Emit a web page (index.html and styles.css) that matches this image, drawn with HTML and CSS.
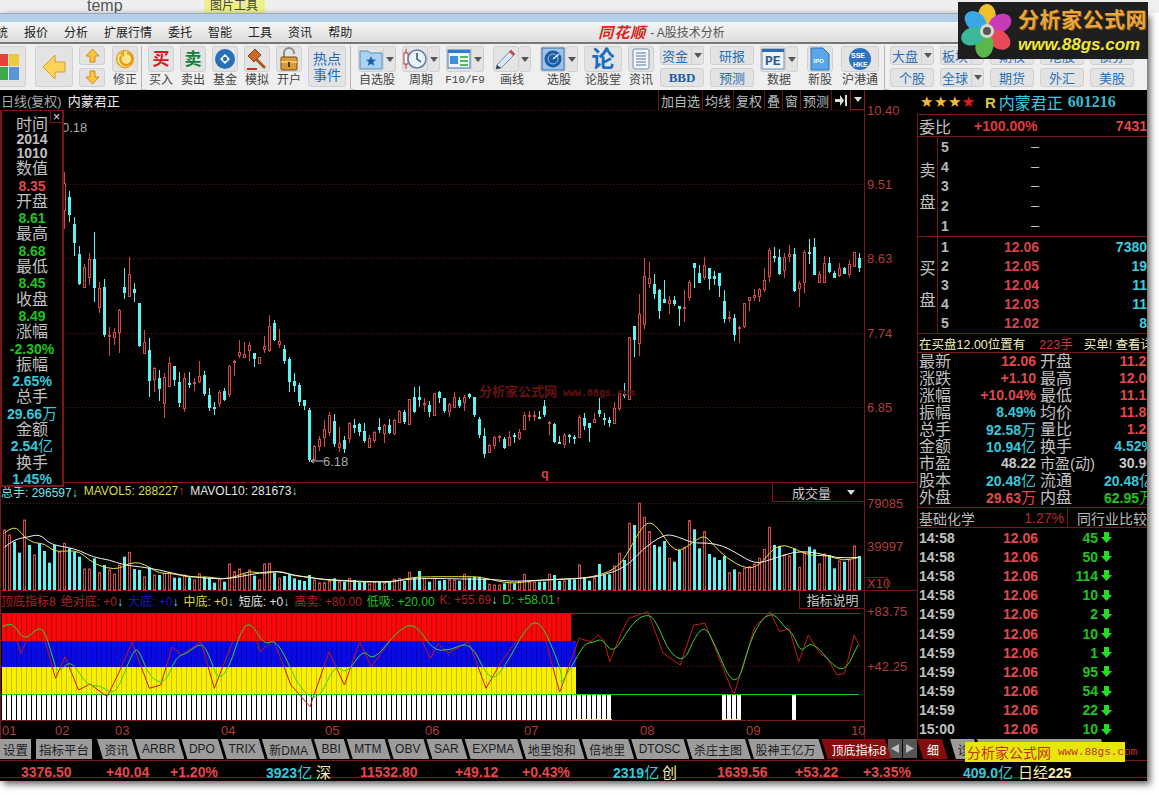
FILE: index.html
```html
<!DOCTYPE html>
<html lang="en">
<head>
    <meta charset="UTF-8">
    <title>同花顺 - A股技术分析</title>
    <link rel="stylesheet" href="styles.css">
</head>
<body>
    <svg class="defs" width="0" height="0">
        <symbol id="down" viewBox="0 0 11 11"><path d="M3 0h5v5h3L5.500 11 0 5h3z" fill="#22dd22"/></symbol>
        <symbol id="caret" viewBox="0 0 8 5"><path d="M0 0h8L4 5z" fill="#555"/></symbol>
    </svg>

    <div class="strip">
        <span class="strip-name">temp</span>
        <span class="strip-tab">图片工具</span>
    </div>

    <div class="window">
        <div class="blueband"></div>
        <div class="menubar">
            <span class="menu-cut">统</span>
            <span>报价</span><span>分析</span><span>扩展行情</span><span>委托</span>
            <span>智能</span><span>工具</span><span>资讯</span><span>帮助</span>
            <b class="brand">同花顺</b>
            <span class="brand-sub">- A股技术分析</span>
        </div>

        <!-- Toolbar -->
        <div class="toolbar">
            <div class="btn big colors">
                <svg width="20" height="26" viewBox="0 0 20 26"><rect y="0" width="9" height="12" fill="#e8423c"/><rect x="10" width="10" height="12" fill="#ecc93c"/><rect y="13" width="9" height="13" fill="#3fa84a"/><rect x="10" y="13" width="10" height="13" fill="#5a93d6"/></svg>
            </div>
            <div class="btn big back">
                <svg width="24" height="26" viewBox="0 0 24 26"><path d="M1 13 13 1v7h10v10H13v7z" fill="#fbd45c" stroke="#d89a2a"/></svg>
            </div>
            <div class="stack narrow">
                <div class="btn"><svg width="15" height="15" viewBox="0 0 15 15"><path d="M7.500 1 14 8h-4v6H5V8H1z" fill="#fbc63c" stroke="#cf8a1c"/></svg></div>
                <div class="btn"><svg width="15" height="15" viewBox="0 0 15 15"><path d="M7.500 14 14 7h-4V1H5v6H1z" fill="#fbc63c" stroke="#cf8a1c"/></svg></div>
            </div>
            <div class="tool">
                <div class="btn icon"><svg width="20" height="20" viewBox="0 0 20 20"><circle cx="10" cy="10" r="8.500" fill="#fde68c" stroke="#e0a62c" stroke-width="1.500"/><path d="M12 4a6 6 0 1 1-6 3" fill="none" stroke="#e39a1c" stroke-width="2.200"/><path d="M9 2v6L5 5z" fill="#e39a1c"/></svg></div>
                <span class="tool-label">修正</span>
            </div>
            <div class="sep"></div>
            <div class="tool">
                <div class="btn icon"><b class="glyph buy">买</b></div>
                <span class="tool-label">买入</span>
            </div>
            <div class="tool">
                <div class="btn icon"><b class="glyph sell">卖</b></div>
                <span class="tool-label">卖出</span>
            </div>
            <div class="tool">
                <div class="btn icon"><svg width="22" height="22" viewBox="0 0 22 22"><circle cx="11" cy="11" r="10" fill="#2670b8"/><path d="M18 1l3 3-2 1zM11 6l5 5-5 5-5-5z" fill="#fff"/><circle cx="11" cy="11" r="2.200" fill="#2670b8"/></svg></div>
                <span class="tool-label">基金</span>
            </div>
            <div class="tool">
                <div class="btn icon"><svg width="22" height="22" viewBox="0 0 22 22"><path d="M2 8 9 1l6 6-7 7z" fill="#c86a2c" stroke="#8a3f14"/><path d="m11 10 9 9-2 2-9-9z" fill="#a9551f"/><path d="M1 20h10v2H1z" fill="#c83020"/></svg></div>
                <span class="tool-label">模拟</span>
            </div>
            <div class="tool">
                <div class="btn icon"><svg width="20" height="24" viewBox="0 0 20 24"><path d="M5 11V6a5 5 0 0 1 10 0v1" fill="none" stroke="#8d8d8d" stroke-width="2"/><rect x="2" y="10" width="16" height="13" rx="1" fill="#d99a3c" stroke="#7a4a14"/><path d="M2 14h16v2H2z" fill="#f3c66c"/><rect x="9" y="15" width="2" height="5" fill="#5a3208"/></svg></div>
                <span class="tool-label">开户</span>
            </div>
            <div class="btn hot">热点<br>事件</div>
            <div class="sep second"></div>
            <div class="tool wide">
                <div class="split">
                    <div class="btn icon"><svg width="24" height="22" viewBox="0 0 24 22"><path d="M1 3h8l2 2h12v16H1z" fill="#a9d3f2" stroke="#5a8fbc"/><path d="m12 8 1.500 3.500 3.500.3-2.700 2.300.9 3.600-3.200-2-3.200 2 .9-3.600L7 11.800l3.500-.3z" fill="#1c5ea8"/></svg></div>
                    <div class="btn drop"><svg width="8" height="5"><use href="#caret"/></svg></div>
                </div>
                <span class="tool-label">自选股</span>
            </div>
            <div class="tool wide">
                <div class="split">
                    <div class="btn icon"><svg width="24" height="24" viewBox="0 0 24 24"><path d="M3 2v20" stroke="#c03030"/><rect x="1" y="6" width="4" height="11" fill="#fff" stroke="#c03030"/><circle cx="14" cy="12" r="9" fill="#eaf2fa" stroke="#5a7fa6" stroke-width="1.500"/><path d="M14 6v6l4 3" fill="none" stroke="#2c5a88" stroke-width="1.500"/></svg></div>
                    <div class="btn drop"><svg width="8" height="5"><use href="#caret"/></svg></div>
                </div>
                <span class="tool-label">周期</span>
            </div>
            <div class="tool wide">
                <div class="split">
                    <div class="btn icon"><svg width="24" height="20" viewBox="0 0 24 20"><rect x="1" y="1" width="22" height="18" fill="#eef4fb" stroke="#3a78b8"/><path d="M1 1h22v3H1z" fill="#2e7ad0"/><path d="M3 7h8v8H3z" fill="#3f8ee0"/><path d="M13 7h8v2h-8zM13 11h8v2h-8zM13 15h8v2h-8z" fill="#58b860"/></svg></div>
                    <div class="btn drop"><svg width="8" height="5"><use href="#caret"/></svg></div>
                </div>
                <span class="tool-label mono">F10/F9</span>
            </div>
            <div class="tool wide far">
                <div class="split">
                    <div class="btn icon"><svg width="24" height="24" viewBox="0 0 24 24"><path d="M3 18 17 3l4 4L7 21l-5 1z" fill="#dbe7f3" stroke="#6d8cb0"/><path d="m15 5 4 4 2-2-4-4z" fill="#d84a4a"/><path d="M3 18l4 3-5 1z" fill="#3a3a3a"/></svg></div>
                    <div class="btn drop"><svg width="8" height="5"><use href="#caret"/></svg></div>
                </div>
                <span class="tool-label">画线</span>
            </div>
            <div class="tool wide far">
                <div class="split">
                    <div class="btn icon"><svg width="24" height="24" viewBox="0 0 24 24"><rect x="1" y="1" width="22" height="22" fill="#9cc3e8" stroke="#3a6ea8"/><circle cx="12" cy="12" r="8.500" fill="#1d5aa0"/><circle cx="12" cy="12" r="5" fill="none" stroke="#8cc8f0"/><path d="M12 12l6-5" stroke="#e8f4ff" stroke-width="1.500"/></svg></div>
                    <div class="btn drop"><svg width="8" height="5"><use href="#caret"/></svg></div>
                </div>
                <span class="tool-label">选股</span>
            </div>
            <div class="tool wide">
                <div class="btn icon full"><b class="glyph lun">论</b></div>
                <span class="tool-label">论股堂</span>
            </div>
            <div class="tool">
                <div class="btn icon"><svg width="18" height="22" viewBox="0 0 18 22"><rect x="1" y="1" width="16" height="20" rx="2" fill="#f2f6fb" stroke="#6f8fb0"/><path d="M4 5h10M4 8h10M4 11h10M4 14h10M4 17h10" stroke="#5a7696"/></svg></div>
                <span class="tool-label">资讯</span>
            </div>
            <div class="stack">
                <div class="btn pair">资金<i class="cut"><svg width="8" height="5"><use href="#caret"/></svg></i></div>
                <div class="btn pair bbd">BBD</div>
            </div>
            <div class="stack">
                <div class="btn pair">研报</div>
                <div class="btn pair">预测</div>
            </div>
            <div class="tool wide">
                <div class="split">
                    <div class="btn icon"><svg width="24" height="24" viewBox="0 0 24 24"><rect x="1" y="2" width="22" height="20" fill="#eef3f9" stroke="#6d8cb0"/><path d="M1 2h22v3H1z" fill="#2c6cb0"/><text x="4" y="18" class="pe">PE</text></svg></div>
                    <div class="btn drop"><svg width="8" height="5"><use href="#caret"/></svg></div>
                </div>
                <span class="tool-label">数据</span>
            </div>
            <div class="tool ipo-tool">
                <div class="btn icon"><svg width="20" height="24" viewBox="0 0 20 24"><path d="M1 1h12l6 6v16H1z" fill="#5aa6e8" stroke="#2c72b8"/><text x="3.500" y="16" class="ipo">IPO</text></svg></div>
                <span class="tool-label">新股</span>
            </div>
            <div class="tool wide ssh">
                <div class="btn icon full"><svg width="26" height="24" viewBox="0 0 26 24"><circle cx="13" cy="12" r="11" fill="#2c72c0"/><text x="4" y="11" class="sse">SSE</text><text x="6" y="20" class="sse">HKE</text></svg></div>
                <span class="tool-label">沪港通</span>
            </div>
            <div class="sep thin"></div>
            <div class="stack">
                <div class="btn pair">大盘<i class="cut"><svg width="8" height="5"><use href="#caret"/></svg></i></div>
                <div class="btn pair">个股</div>
            </div>
            <div class="stack">
                <div class="btn pair">板块<i class="cut"><svg width="8" height="5"><use href="#caret"/></svg></i></div>
                <div class="btn pair">全球<i class="cut"><svg width="8" height="5"><use href="#caret"/></svg></i></div>
            </div>
            <div class="stack"><div class="btn pair">期权</div><div class="btn pair">期货</div></div>
            <div class="stack"><div class="btn pair">港股</div><div class="btn pair">外汇</div></div>
            <div class="stack"><div class="btn pair">债券</div><div class="btn pair">美股</div></div>
        </div>

        <!-- Logo stamped over the window -->
        <div class="logo">
            <svg width="58" height="54" viewBox="-29 -27 58 54">
                <ellipse cx="0" cy="-15" rx="9" ry="12" fill="#f0c02c"/>
                <ellipse cx="0" cy="-15" rx="9" ry="12" fill="#3aa8e8" transform="rotate(-50)"/>
                <ellipse cx="0" cy="-15" rx="9" ry="12" fill="#c83ab8" transform="rotate(60)"/>
                <ellipse cx="0" cy="-15" rx="9" ry="12" fill="#e84a5a" transform="rotate(125)"/>
                <ellipse cx="0" cy="-15" rx="9" ry="12" fill="#5ab84a" transform="rotate(190)"/>
                <ellipse cx="0" cy="-15" rx="9" ry="12" fill="#3ab89a" transform="rotate(250)"/>
                <circle r="7" fill="#d8d8c8"/>
                <circle r="4" fill="#555"/>
            </svg>
            <div class="logo-text">
                <b class="logo-name">分析家公式网</b>
                <b class="logo-url">www.88gs.com</b>
            </div>
        </div>

        <!-- Main black area -->
        <div class="main">
            <div class="upper">
                <div class="chart">
                    <div class="chart-head">
                        <span class="chart-title">日线(复权)</span>
                        <span class="chart-name">内蒙君正</span>
                        <div class="chart-btns">
                            <span>加自选</span><span>均线</span><span>复权</span><span>叠</span><span>窗</span><span>预测</span>
                            <span class="arrow-btn"><svg width="12" height="11" viewBox="0 0 12 11"><path d="M0 4h5V0l4 5.500L5 11V7H0zM10 0h2v11h-2z" fill="#ddd"/></svg></span>
                            <span class="arrow-btn"><svg width="8" height="5" viewBox="0 0 8 5"><path d="M0 0h8L4 5z" fill="#ddd"/></svg></span>
                        </div>
                    </div>

                    <div class="panel kline">
                        <svg class="plot" id="kline" viewBox="0 110 917 372">
                            <text x="867" y="115" class="axis">10.40</text>
                            <text x="867" y="189" class="axis">9.51</text>
                            <text x="867" y="263" class="axis">8.63</text>
                            <text x="867" y="338" class="axis">7.74</text>
                            <text x="867" y="412" class="axis">6.85</text>
                            <text x="62" y="132" class="note">0.18</text>
                            <path d="M311 461h12M311 461l3-2M311 461l3 2" stroke="#ccc" fill="none"/>
                            <text x="323" y="466" class="note">6.18</text>
                            <text x="479" y="396" class="mark">分析家公式网</text>
                            <text x="563" y="396" class="mark-url">www.88gs.com</text>
                            <text x="541" y="478" class="q">q</text>
                        </svg>
                        <div class="info">
                            <span class="info-x">×</span>
                            <span class="lbl">时间</span>
                            <span class="date">2014</span>
                            <span class="date">1010</span>
                            <span class="lbl">数值</span><span class="num up">8.35</span>
                            <span class="lbl">开盘</span><span class="num dn">8.61</span>
                            <span class="lbl">最高</span><span class="num dn">8.68</span>
                            <span class="lbl">最低</span><span class="num dn">8.45</span>
                            <span class="lbl">收盘</span><span class="num dn">8.49</span>
                            <span class="lbl">涨幅</span><span class="num dn">-2.30%</span>
                            <span class="lbl">振幅</span><span class="num cy">2.65%</span>
                            <span class="lbl">总手</span><span class="num cy">29.66<em>万</em></span>
                            <span class="lbl">金额</span><span class="num cy">2.54<em>亿</em></span>
                            <span class="lbl">换手</span><span class="num cy">1.45%</span>
                        </div>
                    </div>

                    <div class="panel volume">
                        <svg class="plot" id="volume" viewBox="0 482 917 109">
                            <text x="867" y="508" class="axis">79085</text>
                            <text x="867" y="551" class="axis">39997</text>
                            <text x="867" y="588" class="axis">X10</text>
                            <path d="M865.500 577.500h22v13" fill="none" stroke="#7a1616"/>
                        </svg>
                        <div class="legend">
                            <span class="c-cy">总手: 296597<i>↓</i></span>
                            <span class="c-ye">MAVOL5: 288227<i class="c-re">↑</i></span>
                            <span class="c-wh">MAVOL10: 281673<i class="c-cy">↓</i></span>
                        </div>
                        <div class="panel-tag vol-tag">成交量<svg width="8" height="5" viewBox="0 0 8 5"><path d="M0 0h8L4 5z" fill="#ddd"/></svg></div>
                    </div>

                    <div class="panel indicator">
                        <svg class="plot" id="kdj" viewBox="0 591 917 130">
                            <text x="867" y="616" class="axis">+83.75</text>
                            <text x="867" y="671" class="axis">+42.25</text>
                        </svg>
                        <div class="legend">
                            <span class="c-dr">顶底指标8</span>
                            <span class="c-dr">绝对底: +0<i class="c-cy">↓</i></span>
                            <span class="c-bl">大底: +0<i class="c-cy">↓</i></span>
                            <span class="c-ye">中底: +0<i class="c-cy">↓</i></span>
                            <span class="c-wh">短底: +0<i class="c-cy">↓</i></span>
                            <span class="c-dr">高卖: +80.00</span>
                            <span class="c-gr">低吸: +20.00</span>
                            <span class="c-dr">K: +55.69<i class="c-cy">↓</i></span>
                            <span class="c-gr">D: +58.01<i class="c-re">↑</i></span>
                        </div>
                        <div class="panel-tag ind-tag">指标说明</div>
                    </div>

                    <div class="panel dates">
                        <svg class="plot" viewBox="0 721 917 18">
                            <path d="M.500 721v18M864.500 721v18" stroke="#7a1616"/>
                            <text x="2" y="735" class="axis">01</text>
                            <text x="55" y="735" class="axis">02</text>
                            <text x="115" y="735" class="axis">03</text>
                            <text x="221" y="735" class="axis">04</text>
                            <text x="325" y="735" class="axis">05</text>
                            <text x="425" y="735" class="axis">06</text>
                            <text x="524" y="735" class="axis">07</text>
                            <text x="640" y="735" class="axis">08</text>
                            <text x="746" y="735" class="axis">09</text>
                            <text x="851" y="735" class="axis">10</text>
                        </svg>
                    </div>
                </div>

                <!-- Quote panel -->
                <div class="side">
                    <div class="side-title">
                        <span class="stars">★★★<i>★</i></span>
                        <span class="side-r">R</span>
                        <span class="side-name">内蒙君正</span>
                        <b class="side-code">601216</b>
                    </div>
                    <div class="side-body">
                        <div class="wb">
                            <span class="cjk16">委比</span>
                            <b class="wb-pct">+100.00%</b>
                            <b class="wb-vol">7431</b>
                        </div>
                        <div class="book book-sell">
                            <div class="book-tag"><span>卖</span><span>盘</span></div>
                            <div class="book-rows">
                                <div class="book-row"><b>5</b><b class="px wh">—</b><b class="qty"></b></div>
                                <div class="book-row"><b>4</b><b class="px wh">—</b><b class="qty"></b></div>
                                <div class="book-row"><b>3</b><b class="px wh">—</b><b class="qty"></b></div>
                                <div class="book-row"><b>2</b><b class="px wh">—</b><b class="qty"></b></div>
                                <div class="book-row"><b>1</b><b class="px wh">—</b><b class="qty"></b></div>
                            </div>
                        </div>
                        <div class="book book-buy">
                            <div class="book-tag"><span>买</span><span>盘</span></div>
                            <div class="book-rows">
                                <div class="book-row"><b>1</b><b class="px">12.06</b><b class="qty">7380</b></div>
                                <div class="book-row"><b>2</b><b class="px">12.05</b><b class="qty">19</b></div>
                                <div class="book-row"><b>3</b><b class="px">12.04</b><b class="qty">11</b></div>
                                <div class="book-row"><b>4</b><b class="px">12.03</b><b class="qty">11</b></div>
                                <div class="book-row"><b>5</b><b class="px">12.02</b><b class="qty">8</b></div>
                            </div>
                        </div>
                        <div class="notice">在买盘12.00位置有<em>223手</em><span>买单! 查看详细</span></div>
                        <div class="stats">
                            <span>最新</span><b class="up">12.06</b><span>开盘</span><b class="up">11.20</b>
                            <span>涨跌</span><b class="up">+1.10</b><span>最高</span><b class="up">12.06</b>
                            <span>涨幅</span><b class="up">+10.04%</b><span>最低</span><b class="up">11.12</b>
                            <span>振幅</span><b class="cy">8.49%</b><span>均价</span><b class="up">11.85</b>
                            <span>总手</span><b class="cy">92.58<em>万</em></b><span>量比</span><b class="up">1.25</b>
                            <span>金额</span><b class="cy">10.94<em>亿</em></b><span>换手</span><b class="cy">4.52%</b>
                            <span>市盈</span><b class="wh">48.22</b><span class="nowrap">市盈(动)</span><b class="wh">30.90</b>
                            <span>股本</span><b class="cy">20.48<em>亿</em></b><span>流通</span><b class="cy">20.48<em>亿</em></b>
                            <span>外盘</span><b class="up">29.63<em>万</em></b><span>内盘</span><b class="dn">62.95<em>万</em></b>
                        </div>
                        <div class="sector">
                            <span class="sector-name">基础化学</span>
                            <span class="sector-pct">1.27%</span>
                            <span class="sector-link">同行业比较</span>
                        </div>
                        <div class="ticks" id="ticks"></div>
                    </div>
                </div>
            </div>

            <div class="tabs">
                <div class="tabs-left">
                    <span class="tab flat">设置</span>
                    <span class="tab flat">指标平台</span>
                    <span class="tab">资讯</span><span class="tab">ARBR</span><span class="tab">DPO</span>
                    <span class="tab">TRIX</span><span class="tab">新DMA</span><span class="tab">BBI</span>
                    <span class="tab">MTM</span><span class="tab">OBV</span><span class="tab">SAR</span>
                    <span class="tab">EXPMA</span><span class="tab">地里饱和</span><span class="tab">倍地里</span>
                    <span class="tab">DTOSC</span><span class="tab">杀庄主图</span><span class="tab">股神王亿万</span>
                    <span class="tab active">顶底指标8</span>
                    <span class="tab-arrow"><svg width="8" height="9" viewBox="0 0 8 9"><path d="M8 0v9L0 4.500z" fill="#bbb"/></svg></span>
                    <span class="tab-arrow"><svg width="8" height="9" viewBox="0 0 8 9"><path d="M0 0v9l8-4.500z" fill="#bbb"/></svg></span>
                </div>
                <span class="tab active fine">细</span>
                <span class="tab zhen">诊</span>
                <span class="tab blank"></span>
                <div class="banner">分析家公式网<span>www.88gs.com</span></div>
            </div>

            <div class="status">
                <b class="up">3376.50</b><b class="up">+40.04</b><b class="up">+1.20%</b>
                <b class="cy">3923<em>亿</em></b><span class="st-name">深</span>
                <b class="up">11532.80</b><b class="up">+49.12</b><b class="up">+0.43%</b>
                <b class="cy">2319<em>亿</em></b><span class="st-name">创</span>
                <b class="up">1639.56</b><b class="up">+53.22</b><b class="up">+3.35%</b>
                <b class="cy">409.0<em>亿</em></b><span class="st-name pale">日经<b>225</b></span>
            </div>
            <div class="cutrow"></div>
        </div>
    </div>

    <script src="chart.js"></script>
</body>
</html>
```

FILE: styles.css
```css
* {
    box-sizing: border-box;
}
html, body {
    margin: 0;
    padding: 0;
    background-color: #fff;
}
body {
    width: 1159px;
    height: 795px;
    overflow: hidden;
    font-family: "Liberation Sans", "Noto Sans CJK SC", sans-serif;
    font-size: 12px;
}
em, i {
    font-style: normal;
}
.defs {
    position: absolute;
}

/* Top of the desktop */
.strip {
    height: 13px;
    display: flex;
    background-color: #efefef;
    overflow: hidden;
    color: #555;
}
.strip-name {
    margin-left: 87px;
    font-size: 16px;
    line-height: 11px;
}
.strip-tab {
    margin-left: 81px;
    width: 61px;
    text-align: center;
    background-color: #eef08c;
    line-height: 12px;
    color: #444;
}
.window {
    position: relative;
    width: 1147px;
    height: 768px;
    box-shadow: 3px 3px 7px rgba(0, 0, 0, 0.65);
}
.blueband {
    height: 9px;
    border-top: 1px solid #9aa8b8;
    background-color: #b4cfea;
}
.menubar {
    height: 22px;
    padding-bottom: 2px;
    display: flex;
    align-items: center;
    gap: 16px;
    overflow: hidden;
    background: linear-gradient(to bottom, #f4f4f4, #dedede);
    border-bottom: 2px solid #777;
    font-size: 12px;
    color: #222;
}
.menu-cut {
    margin-left: -4px;
}
.brand {
    margin-left: 230px;
    font-size: 15px;
    font-style: italic;
    color: #d8261c;
    letter-spacing: 1px;
}
.brand-sub {
    margin-left: -12px;
    color: #555;
}

/* Toolbar */
.toolbar {
    height: 46px;
    padding-top: 2px;
    display: flex;
    gap: 6px;
    overflow: hidden;
    background-color: #efefef;
}
.btn {
    display: flex;
    align-items: center;
    justify-content: center;
    background-color: #e3e3e3;
    border: 1px solid #d0d0d0;
    border-radius: 3px;
}
.big {
    width: 38px;
    height: 41px;
}
.colors {
    margin-left: -12px;
    margin-right: 3px;
    justify-content: flex-end;
    padding-right: 6px;
}
.stack {
    width: 44px;
    flex: none;
    display: flex;
    flex-direction: column;
    gap: 3px;
}
.stack .btn {
    height: 19px;
}
.narrow {
    width: 26px;
    margin-right: 1px;
}
.tool {
    width: 26px;
    flex: none;
    display: flex;
    flex-direction: column;
    align-items: center;
}
.tool.wide {
    width: 38px;
}
.tool.far {
    margin-left: 3px;
}
.tool.ipo-tool {
    margin-left: 3px;
}
.tool.ssh {
    margin-left: 2px;
}
.icon {
    width: 26px;
    height: 26px;
    flex: none;
}
.icon.full {
    width: 100%;
}
.split {
    width: 100%;
    display: flex;
}
.drop {
    flex: 1;
    height: 26px;
    border-left: none;
}
.tool-label {
    margin-top: 1px;
    line-height: 15px;
    white-space: nowrap;
    color: #444;
}
.tool-label.mono {
    font-family: "Liberation Mono", monospace;
    font-size: 11px;
}
.glyph {
    font-size: 17px;
    line-height: 1;
}
.buy {
    color: #d81a22;
}
.sell {
    color: #12803a;
}
.lun {
    font-size: 23px;
    color: #1c6cc0;
}
.hot {
    width: 38px;
    height: 41px;
    flex: none;
    line-height: 16px;
    font-size: 14px;
    text-align: center;
    color: #1c6cc0;
}
.sep {
    width: 5px;
    height: 44px;
    margin: 0 -3.500px;
    border-left: 1px solid #b4b4b4;
    border-bottom: 1px solid #c8c8c8;
    flex: none;
}
.sep.second {
    margin: 0 -2.500px;
}
.sep.thin {
    margin: 0 -5px 0 -1px;
}
.pair {
    font-size: 13px;
    white-space: nowrap;
    color: #2a6fb5;
}
.cut {
    display: flex;
    align-items: center;
    margin-left: 3px;
    padding-left: 2px;
    height: 100%;
    border-left: 1px solid #d0d0d0;
}
.bbd {
    font-family: "Liberation Serif", serif;
    font-weight: bold;
    font-size: 13px;
    color: #1c5ea8;
}
.pe {
    font: bold 13px "Liberation Mono", monospace;
    fill: #2c5a88;
}
.ipo {
    font: bold 6px "Liberation Sans", sans-serif;
    fill: #fff;
}
.sse {
    font: bold 7px "Liberation Sans", sans-serif;
    fill: #fff;
}

/* Logo */
.logo {
    position: absolute;
    left: 958px;
    top: -11px;
    width: 190px;
    height: 57px;
    display: flex;
    align-items: center;
    background-color: rgba(24, 24, 24, 0.97);
}
.logo svg {
    flex: none;
}
.logo-text {
    margin-left: 2px;
    display: flex;
    flex-direction: column;
    white-space: nowrap;
    line-height: 1;
}
.logo-name {
    font-size: 21px;
    color: #e9a63a;
    letter-spacing: .5px;
    text-shadow: 1px 1px 0 #7a4a10;
}
.logo-url {
    margin-top: 6px;
    font-size: 17px;
    font-style: italic;
    color: #f0e63c;
}

/* Main */
.main {
    height: 691px;
    background-color: #000;
    color: #ccc;
}
.upper {
    height: 649px;
    display: flex;
}
.chart {
    width: 917px;
    flex: none;
}
.chart-head {
    height: 20px;
    display: flex;
    align-items: center;
    font-size: 13px;
    padding-left: 1px;
}
.chart-title {
    color: #aaa;
}
.chart-name {
    margin-left: 6px;
    color: #eee;
}
.chart-btns {
    margin-left: auto;
    margin-right: 52px;
    height: 100%;
    display: flex;
    font-size: 13px;
    color: #bbb;
}
.chart-btns span {
    display: flex;
    align-items: center;
    padding: 0 2px;
    border-left: 1px solid #6a1414;
}
.chart-btns .arrow-btn {
    width: 19px;
    justify-content: center;
}
.chart-btns .arrow-btn:last-child {
    width: 15px;
    border-right: 1px solid #8a1a1a;
    border-bottom: 1px solid #8a1a1a;
    border-left: 1px solid #8a1a1a;
}
.panel {
    position: relative;
}
.kline {
    height: 372px;
}
.volume {
    height: 109px;
}
.indicator {
    height: 130px;
}
.dates {
    height: 18px;
}
.plot {
    position: absolute;
    left: 0;
    top: 0;
    width: 917px;
    height: 100%;
    display: block;
    overflow: visible;
}
.axis {
    font: 13px "Liberation Sans", sans-serif;
    fill: #b23c3c;
}
.note {
    font: 13px "Liberation Sans", sans-serif;
    fill: #aaa;
}
.mark {
    font: bold 13px "Noto Sans CJK SC", sans-serif;
    fill: #6a1010;
}
.mark-url {
    font: bold 10px "Liberation Mono", monospace;
    fill: #6a1010;
}
.q {
    font: bold 13px "Liberation Mono", monospace;
    fill: #d04040;
}

/* Date readout laid over the K-line */
.info {
    position: absolute;
    left: 0;
    top: 0;
    width: 64px;
    height: 377px;
    padding-top: 6px;
    display: flex;
    flex-direction: column;
    align-items: center;
    background-color: #000;
    border: 2px solid #7a1616;
    border-top-width: 1px;
    z-index: 1;
}
.info-x {
    position: absolute;
    right: -1px;
    top: -1px;
    width: 13px;
    height: 13px;
    border: 1px solid #7a1616;
    line-height: 11px;
    text-align: center;
    font-size: 13px;
    color: #ddd;
}
.info span {
    flex: none;
}
.lbl {
    height: 16.300px;
    line-height: 16px;
    font-size: 16px;
    color: #c0c0c0;
}
.date {
    height: 14px;
    line-height: 13px;
    font-size: 14px;
    font-weight: bold;
    color: #c0c0c0;
}
.num {
    height: 16.300px;
    line-height: 16px;
    font-size: 14px;
    font-weight: bold;
    white-space: nowrap;
}
.num em, .stats em, .status em {
    font-weight: normal;
    font-size: 15px;
}
.up {
    color: #e2484c;
}
.dn {
    color: #1fc41f;
}
.cy {
    color: #37c8dc;
}
.wh {
    color: #c8c8c8;
}

.legend {
    position: relative;
    height: 18px;
    padding-left: 1px;
    display: flex;
    align-items: center;
    gap: 5px;
    white-space: nowrap;
    font-size: 12px;
}
.legend i {
    font-weight: bold;
}
.volume .legend {
    gap: 6px;
}
.c-cy {
    color: #6fe4ee;
}
.c-ye {
    color: #dcdc40;
}
.c-wh {
    color: #e4e4e4;
}
.c-re {
    color: #e03a3a;
}
.c-dr {
    color: #b02222;
}
.c-bl {
    color: #1818c8;
}
.c-gr {
    color: #1fc41f;
}
.panel-tag {
    position: absolute;
    right: 52px;
    top: 1px;
    display: flex;
    align-items: center;
    justify-content: center;
    font-size: 13px;
    color: #c8c8c8;
    border-left: 1px solid #7a1616;
    border-bottom: 1px solid #7a1616;
}
.vol-tag {
    width: 93px;
    height: 19px;
    padding-left: 9px;
    gap: 16px;
}
.ind-tag {
    width: 66px;
    height: 18px;
    top: 0;
}

/* Quote panel */
.side {
    width: 230px;
    flex: none;
    overflow: hidden;
}
.side-title {
    height: 24px;
    display: flex;
    align-items: center;
    padding-left: 3px;
    white-space: nowrap;
}
.stars {
    width: 53px;
    font: 15px "DejaVu Sans", sans-serif;
    color: #f3bc34;
    letter-spacing: .5px;
}
.stars i {
    color: #e01c1c;
}
.side-r {
    margin-left: 12px;
    font-size: 15px;
    font-weight: bold;
    color: #dcc83c;
}
.side-name {
    margin-left: 3px;
    font-size: 16px;
    color: #37cfe0;
}
.side-code {
    margin-left: 5px;
    font: bold 16px "Liberation Serif", serif;
    color: #37bcd0;
}
.side-body {
    height: 625px;
    border-left: 1px solid #7a1616;
}
.wb {
    position: relative;
    height: 23px;
    padding-left: 1px;
    display: flex;
    align-items: center;
    border-top: 1px solid #7a1616;
    border-bottom: 1px solid #7a1616;
}
.cjk16 {
    font-size: 16px;
    color: #c0c0c0;
}
.wb-pct {
    margin-left: 23px;
    font-size: 14px;
    color: #e2383c;
}
.wb-vol {
    margin-left: auto;
    font-size: 14px;
    color: #e2484c;
}
.book {
    display: flex;
    border-bottom: 1px solid #7a1616;
}
.book-sell {
    height: 100px;
}
.book-buy {
    height: 97px;
}
.book-tag {
    width: 20px;
    display: flex;
    flex-direction: column;
    align-items: center;
    justify-content: center;
    gap: 16px;
    border-right: 1px solid #7a1616;
    font-size: 16px;
    line-height: 16px;
    color: #c0c0c0;
}
.book-rows {
    flex: 1;
    display: flex;
    flex-direction: column;
    justify-content: space-around;
}
.book-row {
    display: grid;
    grid-template-columns: 24px 74px 1fr;
    padding-left: 3px;
    font-size: 14px;
    line-height: 16px;
    color: #b8b8b8;
}
.px {
    text-align: right;
    color: #d8444c;
}
.px.wh {
    color: #eee;
    font-size: 8px;
}
.qty {
    text-align: right;
    color: #37cfe0;
}
.notice {
    height: 19px;
    padding-left: 1px;
    display: flex;
    align-items: center;
    white-space: nowrap;
    font-size: 12.500px;
    color: #f2edb4;
    border-bottom: 1px solid #7a1616;
}
.notice em {
    margin: 0 11px 0 14px;
    color: #c8383c;
}
.stats {
    width: 237px;
    height: 154px;
    padding-left: 1px;
    display: grid;
    grid-template-columns: 33px 84px 40px 78px;
    grid-auto-rows: 17px;
    column-gap: 0;
    align-items: center;
    font-size: 16px;
    line-height: 17px;
    color: #c0c0c0;
}
.stats b {
    text-align: right;
    font-size: 14px;
    white-space: nowrap;
}
.stats span {
    white-space: nowrap;
}
.stats span:nth-child(4n+3) {
    margin-left: 4px;
}
.stats .nowrap {
    font-size: 15px;
}
.sector {
    height: 21px;
    display: flex;
    align-items: center;
    border-top: 1px solid #7a1616;
    border-bottom: 1px solid #7a1616;
    font-size: 14px;
    color: #b8b8b8;
    white-space: nowrap;
}
.sector-name {
    padding-left: 1px;
}
.sector-pct {
    width: 98px;
    padding-right: 3px;
    text-align: right;
    color: #b03034;
}
.sector-link {
    height: 100%;
    padding-left: 9px;
    border-left: 1px solid #7a1616;
    color: #bbb;
}
.ticks {
    height: 212px;
    border-bottom: 1px solid #7a1616;
}
.tick {
    height: 19.200px;
    display: grid;
    grid-template-columns: 38px 81px 60px 14px;
    align-items: center;
    padding-left: 1px;
    font-size: 14px;
    font-weight: bold;
    color: #c0c0c0;
}
.tick .px {
    color: #e2484c;
}
.tick .vol {
    text-align: right;
    color: #1fc41f;
}
.tick svg {
    margin-left: 3px;
    width: 11px;
    height: 11px;
}

/* Bottom tabs */
.tabs {
    position: relative;
    height: 21px;
    display: flex;
    color: #111;
}
.tabs-left {
    width: 917px;
    height: 20px;
    flex: none;
    display: flex;
    align-items: stretch;
    overflow: hidden;
}
.tab {
    height: 20px;
    flex: none;
    margin-right: -3px;
    padding: 0 9px 0 7.500px;
    display: flex;
    align-items: center;
    font-size: 12px;
    white-space: nowrap;
    background-color: #9c9c9c;
    color: #1c1c1c;
    clip-path: polygon(0 0, calc(100% - 6px) 0, 100% 100%, 6px 100%);
}
.tab.flat {
    margin-right: 5px;
    padding: 0 3px;
    font-size: 12.500px;
    clip-path: none;
}
.tab.active {
    padding: 0 5px 0 10px;
    background-color: #860d0d;
    color: #fff;
}
.tab.fine {
    width: 31px;
    margin-right: 0;
    padding: 0 0 0 10px;
}
.tab.zhen {
    width: 30px;
    margin-left: 2px;
    margin-right: 0;
}
.tab.blank {
    width: 130px;
    margin-left: -3px;
}
.tab-arrow {
    width: 16px;
    height: 19px;
    margin-left: 1px;
    display: flex;
    align-items: center;
    justify-content: center;
    background-color: #555;
}
.tab.active + .tab-arrow {
    margin-left: auto;
}
.banner {
    position: absolute;
    left: 965px;
    top: 3px;
    width: 160px;
    height: 20px;
    padding-left: 2px;
    display: flex;
    align-items: center;
    gap: 7px;
    background-color: #e6e60c;
    font-size: 14px;
    color: #c43020;
    white-space: nowrap;
    z-index: 1;
}
.banner span {
    font: 11px "Liberation Mono", monospace;
}

/* Index row */
.status {
    height: 18px;
    padding-left: 21px;
    display: grid;
    grid-template-columns: 85px 64px 96px 50px 44px 95px 67px 91px 49px 55px 78px 68px 100px 55px auto;
    align-items: center;
    border-top: 1px solid #7a1616;
    border-bottom: 1px solid #7a1616;
    font-size: 14px;
    white-space: nowrap;
}
.st-name {
    font-size: 15px;
    color: #f2edb4;
}
.pale b {
    font-size: 14px;
}
.cutrow {
    height: 3px;
    background-color: #000;
}
```

FILE: chart.js
```javascript
const RED = '#d84848';
const CYAN = '#5ff2f2';
const GRID = '#5e1212';
const LINE = '#7a1616';
const NS = 'http://www.w3.org/2000/svg';

function barX(i) {
    return 64.5 + 5 * i;
}

function add(svg, name, attrs) {
    const el = document.createElementNS(NS, name);
    for (const key in attrs) el.setAttribute(key, attrs[key]);
    // keep the labels on top of the drawing
    svg.insertBefore(el, svg.querySelector('text'));
    return el;
}

function hline(svg, y, x1, x2, color, dash) {
    const attrs = { d: `M${x1} ${y + 0.5}H${x2}`, stroke: color, fill: 'none' };
    if (dash) attrs['stroke-dasharray'] = dash;
    add(svg, 'path', attrs);
}

function vline(svg, x, y1, y2, color) {
    add(svg, 'path', { d: `M${x} ${y1}V${y2}`, stroke: color, fill: 'none' });
}

function polyline(svg, pts, color) {
    add(svg, 'polyline', {
        points: pts.map(p => p.join(',')).join(' '),
        stroke: color,
        fill: 'none',
        'stroke-linejoin': 'round',
    });
}

// same points, rounded off through the midpoints
function smooth(svg, pts, color) {
    let d = `M${pts[0][0]} ${pts[0][1]}`;
    for (let i = 1; i < pts.length - 1; i++) {
        const mx = (pts[i][0] + pts[i + 1][0]) / 2;
        const my = (pts[i][1] + pts[i + 1][1]) / 2;
        d += `Q${pts[i][0]} ${pts[i][1]} ${mx} ${my}`;
    }
    const last = pts[pts.length - 1];
    d += `L${last[0]} ${last[1]}`;
    add(svg, 'path', { d: d, stroke: color, fill: 'none' });
}

// wick top, body top, body bottom, wick bottom, 1 = up day
const candles = [
    [172,183,210,229,1],[191,197,215,222,0],[217,224,243,256,0],[246,254,284,285,0],[264,267,287,287,1],
    [253,259,277,285,1],[232,259,288,302,0],[282,288,307,313,1],[279,287,335,337,0],[327,335,336,356,1],
    [328,332,337,345,1],[309,310,332,353,1],[268,287,293,299,0],[257,274,296,296,1],[283,289,293,302,0],
    [303,303,346,347,0],[330,342,353,354,1],[338,350,381,397,0],[367,368,379,392,1],[370,378,389,401,0],
    [373,377,403,418,1],[357,363,386,387,1],[366,366,380,386,0],[372,382,403,407,0],[373,378,408,412,1],
    [372,383,385,388,0],[378,382,383,391,1],[361,376,381,383,1],[371,375,394,396,0],[388,395,408,411,0],
    [402,407,409,415,0],[390,392,403,407,1],[388,391,400,401,0],[365,366,394,397,1],[360,361,362,376,1],
    [340,352,355,358,1],[342,354,357,358,1],[342,345,350,361,1],[353,353,359,367,0],[357,357,363,364,1],
    [336,346,349,353,1],[315,326,350,352,1],[320,323,340,341,0],[329,341,344,348,1],[345,349,361,364,0],
    [357,359,382,392,0],[373,381,386,392,0],[383,385,402,406,0],[400,400,406,410,0],[408,410,460,462,0],
    [445,446,459,459,1],[436,439,446,451,1],[420,429,437,447,1],[412,415,432,436,1],[414,421,444,447,0],
    [427,443,447,452,1],[436,440,449,453,0],[422,423,438,443,1],[419,425,428,433,0],[423,424,432,436,0],
    [423,431,441,443,0],[435,438,447,447,1],[431,432,440,443,1],[418,427,430,433,0],[424,425,433,443,1],
    [419,425,433,434,0],[419,420,433,435,1],[410,411,422,423,1],[410,412,422,424,0],[399,399,424,424,1],
    [387,397,412,413,0],[386,397,400,407,0],[398,403,404,412,1],[401,405,412,417,0],[393,393,415,416,1],
    [391,392,398,403,0],[398,398,411,413,0],[403,404,411,417,1],[392,397,407,408,1],[397,400,406,408,0],
    [395,397,402,411,1],[393,394,397,399,0],[397,397,415,417,0],[417,419,435,438,0],[428,436,454,458,0],
    [444,445,452,453,1],[436,437,445,449,1],[435,436,437,442,1],[437,439,448,449,0],[431,437,445,446,1],
    [433,435,437,443,0],[429,432,438,440,1],[412,415,429,430,1],[411,415,416,421,1],[411,415,416,421,1],
    [411,417,417,417,0],[400,406,415,417,0],[421,422,422,435,1],[423,424,442,443,0],[436,442,443,444,0],
    [433,435,444,448,1],[434,435,436,443,0],[435,437,438,444,0],[415,417,437,437,1],[413,418,426,430,0],
    [423,423,428,442,0],[413,419,422,423,1],[398,410,414,417,0],[413,418,420,425,0],[417,420,423,427,0],
    [402,408,423,424,1],[393,393,408,411,1],[383,394,396,398,0],[337,337,399,400,1],[326,326,340,357,0],
    [294,314,343,356,1],[258,276,324,329,1],[262,278,283,288,1],[274,284,294,299,0],[289,290,311,319,0],
    [280,299,303,303,0],[296,300,303,314,1],[296,300,304,306,0],[306,306,309,326,0],[290,307,308,322,1],
    [280,282,297,301,1],[263,263,268,288,0],[265,273,283,283,0],[257,265,277,280,1],[268,268,279,290,0],
    [271,276,279,285,0],[273,273,286,297,0],[290,301,319,323,0],[311,317,318,322,1],[314,318,335,341,0],
    [326,327,328,343,1],[303,303,326,328,1],[297,297,300,311,1],[289,295,297,301,1],[288,289,296,302,1],
    [268,280,289,292,1],[248,250,276,282,1],[247,256,258,262,0],[249,257,274,275,0],[253,257,270,278,1],
    [245,254,256,262,1],[248,254,291,292,0],[281,283,288,307,1],[250,252,282,293,1],[239,252,254,264,0],
    [238,247,275,275,0],[271,274,282,283,1],[256,263,282,283,1],[257,263,272,273,0],[271,273,278,278,0],
    [263,268,275,277,1],[267,268,274,274,0],[260,264,274,277,1],[252,252,266,267,1],[253,258,268,272,0],
];

// bar tops, 3 units to the pixel below y=480; negative = down day
const volumes = [
    150,165,-185,-218,120,-195,225,-190,-213,-248,-195,215,190,-205,-215,-230,267,267,-235,278,-255,270,282,255,
    -230,217,-267,-270,291,-262,285,-285,280,277,-293,-293,285,-292,300,282,-290,-292,-308,298,-305,252,275,267,
    283,270,-287,300,252,250,-278,295,-288,-283,-295,-300,-303,-285,300,308,308,302,-295,305,-305,295,-300,-307,
    -305,312,307,-305,308,-303,298,295,-303,277,-292,-273,295,-305,295,-302,-300,300,300,-302,
    283,-293,-290,-290,-295,313,315,315,-310,307,-310,305,283,307,307,-305,-305,283,-285,-303,303,-298,-298,255,
    -292,-302,293,-252,-285,-283,258,220,-240,130,-135,70,112,155,-195,-200,-183,235,-245,-210,202,122,-148,-205,
    155,-222,-232,-240,-228,278,-268,278,265,260,252,235,208,142,-195,-198,225,228,-205,262,218,-200,-208,252,
    222,-225,-265,243,-245,240,198,-228,
];

function traced(pts, x0, sx, y0) {
    return pts.map(p => [+(x0 + p[0] / sx).toFixed(1), +(y0 + p[1] / 3).toFixed(1)]);
}

const ma5 = traced([[13,160],[43,133],[73,172],[103,190],[133,190],[163,215],[208,212],[238,215],[268,240],[298,258],[343,268],[370,260],[388,250],[418,247],[448,262],[478,280],[508,280],[538,285],[568,292],[628,290],[668,298],[708,290],[748,272],[790,282],[820,275],[850,275],[880,288],[925,290],[970,300],[1030,302],[1090,307],[1130,305],[1170,308],[1200,300],[1240,292],[1290,290],[1380,290]], 0, 3, 480)
    .concat(traced([[60,290],[150,312],[210,303],[300,297],[370,295],[420,285],[470,265],[500,225],[540,150],[568,122],[600,150],[630,200],[660,215],[700,185],[735,165],[760,195],[800,235],[860,268],[900,255],[940,205],[975,193],[1020,215],[1060,228],[1100,225],[1150,243],[1198,232]], 460, 3, 480));
const ma10 = traced([[13,202],[43,178],[80,172],[120,162],[150,193],[208,203],[240,212],[280,232],[330,240],[370,255],[420,260],[480,270],[540,285],[600,293],[670,298],[720,290],[780,278],[830,273],[880,285],[940,295],[1000,300],[1060,303],[1120,305],[1170,305],[1230,297],[1300,295],[1380,297]], 0, 3, 480)
    .concat(traced([[100,298],[160,305],[240,300],[340,297],[420,290],[500,260],[550,205],[610,165],[640,165],[700,190],[740,188],[790,197],[830,220],[885,252],[930,240],[1000,215],[1060,215],[1130,235],[1198,232]], 460, 3, 480));

const kLine = traced([[5,60],[20,40],[45,95],[55,130],[70,90],[100,55],[115,80],[145,205],[170,140],[205,240],[235,222],[280,260],[310,190],[345,97],[390,235],[420,225],[450,110],[475,135],[525,95],[560,235],[620,60],[655,35],[680,125],[715,90],[760,225],[810,290],[860,125],[900,225],[940,95],[970,170],[1040,60],[1080,38],[1125,145],[1145,100],[1170,130],[1225,95],[1270,235],[1310,155],[1370,60],[1408,22],[1430,110],[1462,245]], 0, 2.613, 610)
    .concat(traced([[0,245],[50,85],[80,95],[100,75],[115,90],[130,155],[160,70],[180,25],[230,5],[270,130],[315,165],[350,45],[380,40],[455,255],[510,50],[550,5],[575,65],[600,55],[625,155],[650,75],[680,130],[700,145],[725,195],[745,190],[770,75],[785,110]], 560, 2.618, 610));
const dLine = traced([[5,50],[25,40],[40,50],[65,92],[100,50],[120,70],[145,175],[155,185],[180,155],[200,175],[230,228],[260,225],[290,250],[310,235],[350,115],[365,125],[390,200],[430,225],[460,140],[490,130],[525,97],[545,130],[570,215],[600,170],[630,60],[655,35],[690,105],[715,90],[740,125],[780,230],[830,280],[875,160],[905,195],[950,115],[975,155],[1040,60],[1085,38],[1130,120],[1175,122],[1230,92],[1280,220],[1320,170],[1370,60],[1408,25],[1450,130],[1470,200]], 0, 2.613, 610)
    .concat(traced([[0,225],[20,190],[40,150],[65,100],[90,97],[110,85],[140,135],[190,35],[235,8],[260,55],[285,125],[325,158],[355,75],[380,50],[400,90],[460,250],[500,85],[530,25],[560,8],[590,55],[610,70],[630,130],[660,90],[720,175],[750,178],[780,105]], 560, 2.618, 610));

function drawKline() {
    const svg = document.getElementById('kline');
    [184, 258, 333, 407].forEach(y => hline(svg, y, 64, 864, GRID, '1 2'));
    hline(svg, 110, 64, 864, GRID, '1 2');
    vline(svg, 864.5, 110, 482, LINE);
    candles.forEach((c, i) => {
        const x = barX(i);
        const color = c[4] ? RED : CYAN;
        vline(svg, x, c[0], c[3], color);
        if (c[4]) {
            add(svg, 'rect', { x: x - 1, y: c[1] + 0.5, width: 2, height: Math.max(c[2] - c[1], 1), fill: '#000', stroke: RED });
        } else {
            add(svg, 'rect', { x: x - 1.5, y: c[1], width: 3, height: Math.max(c[2] - c[1], 2), fill: CYAN });
        }
    });
}

function drawVolume() {
    const svg = document.getElementById('volume');
    hline(svg, 482, 0, 917, LINE);
    hline(svg, 590, 0, 917, LINE);
    hline(svg, 503, 0, 864, GRID, '1 2');
    hline(svg, 546, 0, 864, GRID, '1 2');
    vline(svg, 0.5, 482, 591, LINE);
    vline(svg, 864.5, 482, 591, LINE);
    volumes.forEach((v, i) => {
        const x = barX(i - 12);
        const top = 480 + Math.abs(v) / 3;
        if (v > 0) {
            add(svg, 'rect', { x: x - 1, y: top, width: 2, height: 590 - top, fill: 'none', stroke: RED });
        } else {
            add(svg, 'rect', { x: x - 1.5, y: top, width: 3, height: 590 - top, fill: CYAN });
        }
    });
    smooth(svg, ma5, '#e8e23c');
    smooth(svg, ma10, '#f2f2f2');
}

function stripes(svg, x2, y1, y2, color, gap) {
    add(svg, 'rect', { x: 2, y: y1, width: x2 - 2, height: y2 - y1, fill: color });
    for (let x = 6; x < x2; x += 5) {
        add(svg, 'rect', { x: x, y: y1, width: 1, height: y2 - y1, fill: gap });
    }
}

function drawIndicator() {
    const svg = document.getElementById('kdj');
    vline(svg, 0.5, 591, 721, LINE);
    vline(svg, 864.5, 591, 721, LINE);
    hline(svg, 666, 0, 864, GRID, '1 2');
    stripes(svg, 571, 614, 641, '#fa0808', '#c00808');
    stripes(svg, 576, 641, 667, '#0a0ae6', '#0606b0');
    stripes(svg, 576, 667, 694, '#f8f000', '#c8c000');
    stripes(svg, 611, 694, 721, '#ffffff', '#000');
    [[722, 741], [792, 796]].forEach(s => {
        add(svg, 'rect', { x: s[0], y: 694, width: s[1] - s[0], height: 27, fill: '#fff' });
        for (let x = s[0] + 4; x < s[1]; x += 5) {
            add(svg, 'rect', { x: x, y: 694, width: 1, height: 26, fill: '#000' });
        }
        add(svg, 'rect', { x: s[0], y: 719, width: s[1] - s[0], height: 2, fill: '#ffe9a0' });
    });
    add(svg, 'rect', { x: 576, y: 719, width: 36, height: 2, fill: '#ffe9a0' });
    hline(svg, 613, 0, 860, '#b01818');
    hline(svg, 694, 2, 859, '#22c822');
    hline(svg, 720, 0, 865, LINE);
    polyline(svg, kLine, '#c81818');
    smooth(svg, dLine, '#32d432');
}

function drawTicks() {
    const rows = [
        ['14:58', 45], ['14:58', 50], ['14:58', 114], ['14:58', 10], ['14:59', 2], ['14:59', 10],
        ['14:59', 1], ['14:59', 95], ['14:59', 54], ['14:59', 22], ['15:00', 10],
    ];
    document.getElementById('ticks').innerHTML = rows.map(r => `
        <div class="tick">
            <span>${r[0]}</span>
            <span class="px">12.06</span>
            <span class="vol">${r[1]}</span>
            <svg><use href="#down"/></svg>
        </div>`).join('');
}

drawKline();
drawVolume();
drawIndicator();
drawTicks();
```
